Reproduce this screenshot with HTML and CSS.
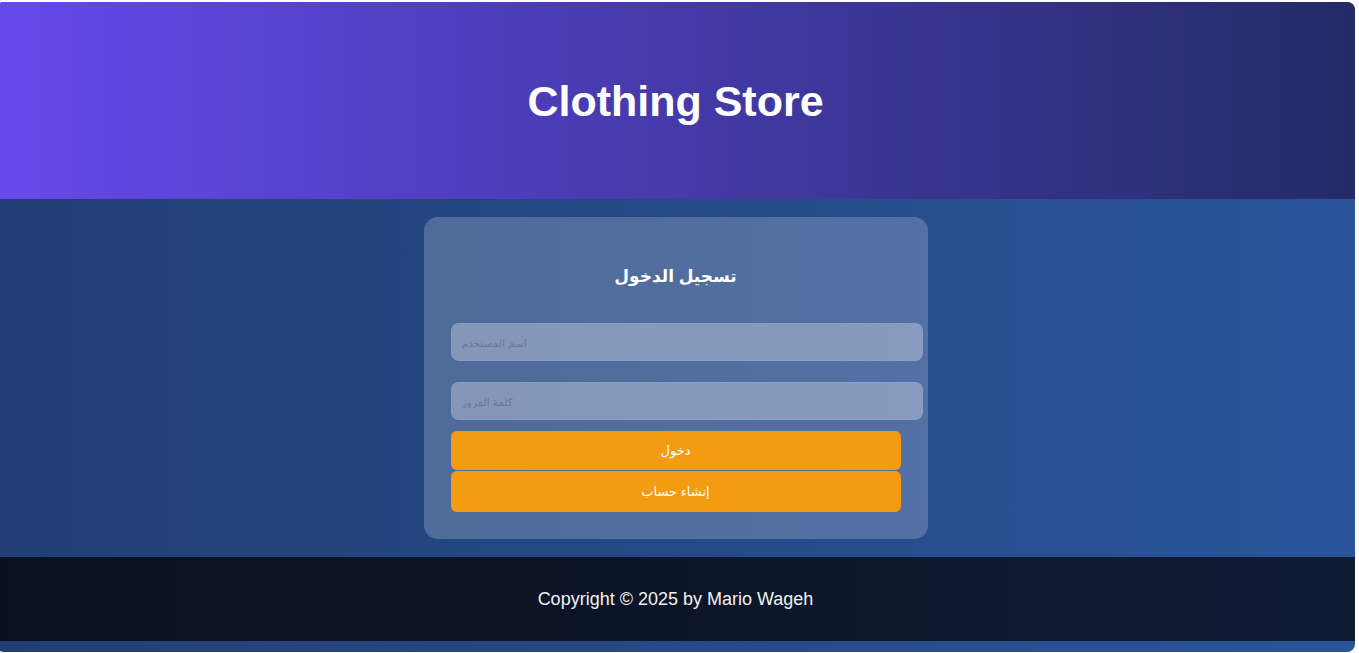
FILE: index.html
```html
<!DOCTYPE html>
<html lang="ar">
<head>
<meta charset="utf-8">
<title>Clothing Store</title>
<link rel="stylesheet" href="styles.css">
</head>
<body>
<div class="page">
  <header class="site-header">
    <h1 class="site-title">Clothing Store</h1>
  </header>
  <main class="site-main">
    <section class="login-card">
      <h2 class="login-title">تسجيل الدخول</h2>
      <form class="login-form">
        <input class="field field-user" type="text" placeholder="اسم المستخدم">
        <input class="field field-pass" type="password" placeholder="كلمة المرور">
        <button class="btn btn-login" type="button">دخول</button>
        <button class="btn btn-signup" type="button">إنشاء حساب</button>
      </form>
    </section>
  </main>
  <footer class="site-footer">
    <p class="copyright">Copyright © 2025 by Mario Wageh</p>
  </footer>
</div>
</body>
</html>
```

FILE: styles.css
```css
html, body {
  margin: 0;
  padding: 0;
  background: #ffffff;
}

body {
  font-family: "Liberation Sans", Arial, "DejaVu Sans", sans-serif;
}

.page {
  margin: 2px 4px 1px -4px;
  height: 650px;
  border-radius: 8px;
  overflow: hidden;
  background: linear-gradient(90deg, #213f74, #2a549a);
  display: flex;
  flex-direction: column;
}

.site-header {
  height: 197px;
  flex: none;
  display: flex;
  align-items: center;
  justify-content: center;
  background: linear-gradient(90deg, #6649ec, #232b66);
}

.site-title {
  margin: 0;
  color: #ffffff;
  font-size: 43px;
  font-weight: bold;
  line-height: 50px;
  padding-top: 0;
}

.site-main {
  flex: none;
  height: 358px;
  display: flex;
  justify-content: center;
  align-items: flex-start;
  padding-top: 18px;
  box-sizing: border-box;
}

.login-card {
  width: 504px;
  height: 322px;
  box-sizing: border-box;
  padding: 33px 27px 27px 27px;
  border-radius: 14px;
  background: rgba(255, 255, 255, 0.2);
}

.login-title {
  direction: rtl;
  margin: 14px 0 33px;
  text-align: center;
  color: #ffffff;
  font-size: 17px;
  font-weight: bold;
  line-height: 26px;
  font-family: "Liberation Sans", Arial, "DejaVu Sans", sans-serif;
}

.login-form {
  display: flex;
  flex-direction: column;
  align-items: flex-start;
}

.field {
  direction: ltr;
  text-align: left;
  width: 100%;
  box-sizing: content-box;
  padding: 10px;
  margin: 0;
  height: 16px;
  border: 1px solid rgba(255, 255, 255, 0.05);
  border-radius: 8px;
  background: rgba(255, 255, 255, 0.3);
  color: #1d2a44;
  font-size: 13.333px;
  font-family: "Liberation Sans", Arial, "DejaVu Sans", sans-serif;
  outline: none;
}

.field::placeholder {
  color: #6c7792;
  font-size: 10.5px;
}

.field-user {
  margin-bottom: 21px;
}

.field-pass {
  margin-bottom: 11px;
}

.btn {
  direction: rtl;
  width: 450px;
  height: 40px;
  border: none;
  border-radius: 6px;
  background: #f39c12;
  color: #ffffff;
  font-size: 13px;
  font-family: "Liberation Sans", Arial, "DejaVu Sans", sans-serif;
  cursor: pointer;
}

.btn-login {
  height: 39px;
  margin-bottom: 1px;
}

.btn-signup {
  height: 41px;
}

.site-footer {
  flex: none;
  height: 84px;
  display: flex;
  align-items: center;
  justify-content: center;
  background: linear-gradient(90deg, #0a111e, #0f1a33);
}

.copyright {
  margin: 0;
  color: #f2f2f2;
  font-size: 18px;
  line-height: 22px;
}
```
